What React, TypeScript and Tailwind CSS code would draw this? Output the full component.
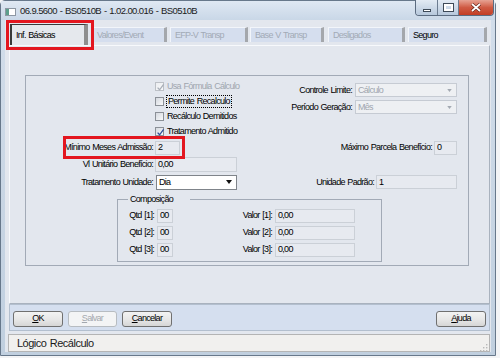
import clsx from "clsx";

const tabs = [
  { label: "Valores/Event", className: "ml-[4px] w-[75px]", enabled: false },
  { label: "EFP-V Transp", className: "ml-[3px] w-[78px]", enabled: false },
  { label: "Base V Transp", className: "ml-[2px] w-[74px]", enabled: false },
  { label: "Desligados", className: "ml-[4px] w-[77px]", enabled: false },
  { label: "Seguro", className: "ml-[3px] w-[79px]", enabled: true },
];

function CheckBox({ checked, disabled }: { checked?: boolean; disabled?: boolean }) {
  return (
    <span
      className={clsx(
        "relative block h-[9px] w-[9px] shrink-0 border bg-gradient-to-br",
        disabled ? "border-[#bcc0c6] from-[#eceef1] to-[#f8f9fa]" : "border-[#8b9097] from-[#d5d9df] to-[#f9fafb]",
      )}
    >
      {checked ? (
        <svg viewBox="0 0 9 9" className="absolute left-0 top-0 h-[9px] w-[9px] overflow-visible">
          <path
            d="M1.6 4.6 L3.6 6.8 L7.6 1.4"
            fill="none"
            stroke={disabled ? "#a9afb8" : "#2f4f9a"}
            strokeWidth="1.3"
          />
        </svg>
      ) : null}
    </span>
  );
}

function Field({ value, className }: { value: string; className?: string }) {
  return (
    <div className={clsx("flex h-[14px] items-center border border-[#cbd0d7] bg-[#e7eaf0] pl-[2px]", className)}>
      {value}
    </div>
  );
}

function Combo({ value, disabled, className }: { value: string; disabled?: boolean; className?: string }) {
  return (
    <div
      className={clsx(
        "flex h-[14px] items-center justify-between border pl-[2px] pr-[4px]",
        disabled ? "border-[#c6cbd3] bg-[#eef0f3] text-[#a0a6af]" : "h-[15px] border-[#7f848a] bg-white text-black",
        className,
      )}
    >
      <span>{value}</span>
      <svg viewBox="0 0 6 4" className={disabled ? "h-[3px] w-[5px]" : "h-[4px] w-[6px]"}>
        <path d="M0 0 H6 L3 4 Z" fill={disabled ? "#a3a9b2" : "#111"} />
      </svg>
    </div>
  );
}

function Btn({ first, rest, disabled, className }: { first: string; rest: string; disabled?: boolean; className?: string }) {
  return (
    <div
      className={clsx(
        "flex h-[16px] items-center justify-center rounded-[3px] border",
        disabled
          ? "border-[#b7bcc1] bg-[#f3f4f5] text-[#a3a8ae]"
          : "border-[#707070] bg-gradient-to-b from-[#f3f3f3] via-[#e8e8e8] to-[#d6d6d6] text-black",
        className,
      )}
    >
      <span className="underline">{first}</span>
      {rest}
    </div>
  );
}

function LabelRow({ label, children, className }: { label: string; children: React.ReactNode; className?: string }) {
  return (
    <div className={clsx("flex items-center", className)}>
      <span className="w-[127px] whitespace-nowrap text-right">{label}</span>
      {children}
    </div>
  );
}

export default function App() {
  return (
    <div className="relative h-[358px] w-[500px] overflow-hidden bg-[#f3f4f6] font-['Liberation_Sans',Arial,sans-serif] text-[9px] leading-none tracking-[-0.7px] [word-spacing:0.8px] text-black">
      {/* window frame */}
      <div className="flex h-[356px] w-[496px] flex-col rounded-t-[5px] border border-[#67788b] bg-gradient-to-b from-[#d3deeb] to-[#c0cfdf]">
        {/* title bar */}
        <div className="flex h-[19px] items-start bg-gradient-to-b from-[#dfe8f3] to-[#c9d7e7]">
          <div className="ml-[4px] mt-[7px] flex h-[8px] w-[11px] border border-[#8d97a3] bg-white">
            <span className="h-full w-[3px] bg-[#5c9f8c]" />
          </div>
          <span className="ml-[4px] mt-[5px] text-[9.5px] tracking-[-0.6px] text-[#1b1b1b]">
            06.9.5600 - BS0510B - 1.02.00.016 - BS0510B
          </span>
          <div className="ml-auto mr-[1px] mt-[-1px] flex h-[16px] overflow-hidden rounded-b-[4px] border border-t-0 border-[#5b6b80]">
            <div className="flex w-[22px] items-center justify-center border-r border-[#6c7c90] bg-gradient-to-b from-[#e3ebf4] to-[#b7c8dc]">
              <span className="mt-[5px] h-[3px] w-[8px] border border-[#3e4a58] bg-white" />
            </div>
            <div className="flex w-[21px] items-center justify-center border-r border-[#6c7c90] bg-gradient-to-b from-[#e3ebf4] to-[#b7c8dc]">
              <span className="h-[7px] w-[9px] border-2 border-white outline outline-1 outline-[#3e4a58]" />
            </div>
            <div className="flex w-[34px] items-center justify-center bg-gradient-to-b from-[#e6a293] via-[#cf5a43] to-[#c23d24]">
              <svg viewBox="0 0 10 9" className="h-[9px] w-[10px]">
                <path d="M1 1 L9 8 M9 1 L1 8" stroke="#5a1c12" strokeWidth="3" />
                <path d="M1 1 L9 8 M9 1 L1 8" stroke="#fff" strokeWidth="1.8" />
              </svg>
            </div>
          </div>
        </div>

        {/* client area */}
        <div className="mx-[4px] mb-[3px] flex flex-1 flex-col bg-[#e3e7ee]">
          {/* tabs */}
          <div className="flex h-[25px] items-start pl-[5px] pt-[4px]">
            <div className="relative z-10 flex h-[21px] w-[78px] items-center border-l-2 border-r-[4px] border-t border-[#3a3a3a] border-r-[#8e8e8e] bg-[#e5e8ed] pl-[4px]">
              Inf. Básicas
            </div>
            {tabs.map((tab) => (
              <div
                key={tab.label}
                className={clsx(
                  "mt-[3px] flex h-[15px] items-center border-l border-t border-[#f2f5fa] border-r-[3px] border-r-[#a4a7ac] bg-[#d5deee] pl-[4px]",
                  tab.enabled ? "text-black" : "text-[#a2aab6]",
                  tab.className,
                )}
              >
                {tab.label}
              </div>
            ))}
          </div>

          {/* tab page */}
          <div className="ml-[4px] mr-[1px] h-[259px] border border-[#a9b2be] border-l-[#f7f9fc] border-t-[#f7f9fc] pt-[29px]">
            <div className="ml-[15px] flex h-[191px] w-[444px] flex-col border border-[#a2aab6] pr-[11px]">
              {/* checkboxes + selects */}
              <div className="flex h-[63px]">
                <div className="ml-[129px] flex flex-col pt-[3px]">
                  <div className="flex h-[15px] items-center text-[#a0a6af]">
                    <CheckBox checked disabled />
                    <span className="ml-[3px]">Usa Fórmula Cálculo</span>
                  </div>
                  <div className="flex h-[15px] items-center">
                    <CheckBox />
                    <span className="ml-[2px] border border-dotted border-black px-[1px] py-[1px]">Permite Recalculo</span>
                  </div>
                  <div className="flex h-[15px] items-center">
                    <CheckBox />
                    <span className="ml-[3px]">Recálculo Demitidos</span>
                  </div>
                  <div className="flex h-[15px] items-center">
                    <CheckBox checked />
                    <span className="ml-[3px]">Tratamento Admitido</span>
                  </div>
                </div>
                <div className="ml-auto flex flex-col gap-[3px] pt-[7px]">
                  <div className="flex items-center justify-end">
                    <span>Controle Limite:</span>
                    <Combo value="Cálculo" disabled className="ml-[3px] w-[102px]" />
                  </div>
                  <div className="flex items-center justify-end">
                    <span>Período Geração:</span>
                    <Combo value="Mês" disabled className="ml-[3px] w-[102px]" />
                  </div>
                </div>
              </div>

              <LabelRow label="Mínimo Meses Admissão:" className="h-[17px]">
                <Field value="2" className="ml-[2px] w-[25px]" />
                <span className="ml-auto">Máximo Parcela Benefício:</span>
                <Field value="0" className="ml-[2px] w-[23px]" />
              </LabelRow>
              <LabelRow label="Vl Unitário Benefício:" className="h-[17px]">
                <Field value="0,00" className="ml-[2px] h-[15px] w-[82px]" />
              </LabelRow>
              <LabelRow label="Tratamento Unidade:" className="h-[18px]">
                <Combo value="Dia" className="ml-[3px] w-[81px]" />
                <span className="ml-auto">Unidade Padrão:</span>
                <Field value="1" className="ml-[2px] w-[81px]" />
              </LabelRow>

              <fieldset className="ml-[91px] mt-[2px] w-[265px] border border-[#a2aab6] pb-[3px] pt-[2px]">
                <legend className="ml-[10px] w-[62px] px-[2px] leading-[12px]">Composição</legend>
                {[1, 2, 3].map((n) => (
                  <div key={n} className="flex h-[17px] items-center">
                    <span className="w-[36px] text-right">Qtd [{n}]:</span>
                    <Field value="00" className="ml-[3px] w-[16px]" />
                    <span className="w-[99px] text-right">Valor [{n}]:</span>
                    <Field value="0,00" className="ml-[3px] w-[80px]" />
                  </div>
                ))}
              </fieldset>
            </div>
          </div>

          {/* button bar */}
          <div className="ml-[4px] mr-[1px] flex h-[27px] items-center gap-[5px] border border-[#b3bfce] bg-[#d5dfef] px-[3px] pt-[2px]">
            <Btn first="O" rest="K" className="w-[50px]" />
            <Btn first="S" rest="alvar" disabled className="w-[49px]" />
            <Btn first="C" rest="ancelar" className="w-[50px]" />
            <Btn first="A" rest="juda" className="ml-auto w-[50px]" />
          </div>

          {/* status bar */}
          <div className="ml-[3px] mr-[1px] mt-[3px] flex h-[18px] items-center border border-[#b4b4b4] bg-[#f1f0ee] pl-[8px] text-[11px] tracking-[-0.5px] text-[#1a1a1a]">
            Lógico Recálculo
            <svg viewBox="0 0 8 8" className="ml-auto mr-[1px] mt-[9px] h-[8px] w-[8px]">
              <rect x="6" y="0" width="1.4" height="1.4" fill="#b9b9b9" />
              <rect x="3" y="3" width="1.4" height="1.4" fill="#b9b9b9" />
              <rect x="6" y="3" width="1.4" height="1.4" fill="#b9b9b9" />
              <rect x="0" y="6" width="1.4" height="1.4" fill="#b9b9b9" />
              <rect x="3" y="6" width="1.4" height="1.4" fill="#b9b9b9" />
              <rect x="6" y="6" width="1.4" height="1.4" fill="#b9b9b9" />
            </svg>
          </div>
        </div>
      </div>

      {/* red annotation boxes */}
      <div className="absolute left-[6px] top-[20px] h-[30px] w-[88px] border-[3px] border-[#e3161f]" />
      <div className="absolute left-[63px] top-[136px] h-[23px] w-[122px] border-[3px] border-[#e3161f]" />
    </div>
  );
}
